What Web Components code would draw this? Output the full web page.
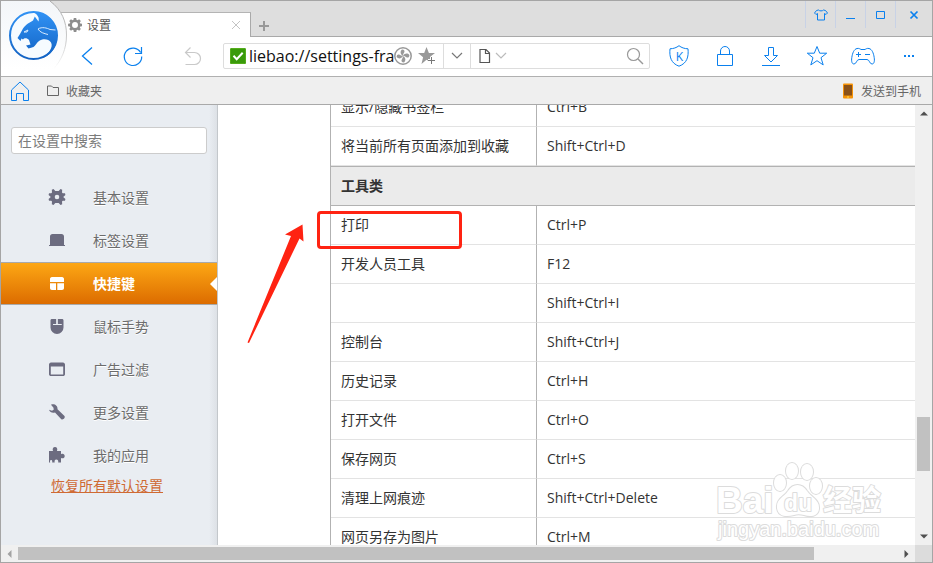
<!DOCTYPE html>
<html lang="zh-CN">
<head>
<meta charset="utf-8">
<title>设置</title>
<style>
html, body { height: 100%; margin: 0; }
body { font-family: "Open Sans", "Noto Sans CJK SC", sans-serif; font-size: 14px; color: #333; background: #fff; overflow: hidden; }
</style>
</head>
<body>
<browser-window></browser-window>

<script>
const ICONS = {
  gear: ['0 0 16 16', '<path fill="currentColor" fill-rule="evenodd" d="M6.6 0h2.8l.3 2 1.3.5L12.7 1.4l2 2-1.2 1.6.5 1.3 2 .3v2.8l-2 .3-.5 1.3 1.2 1.6-2 2-1.6-1.2-1.300.5-.3 2H6.600l-.3-2-1.300-.5-1.600 1.200-2-2 1.200-1.600-.5-1.300-2-.3V6.600l2-.3.5-1.300-1.200-1.600 2-2 1.600 1.200 1.300-.5zM8 4.600a3.400 3.400 0 100 6.800 3.400 3.400 0 000-6.800z"/>'],
  gearSolid: ['0 0 16 16', '<path fill="currentColor" fill-rule="evenodd" d="M4.500 0l1.800 2h3.400l1.800-2 1.700.8-.2 2.600.8.8 2.200.1.4 1.700L14.200 8l2.200 2-.4 1.700-2.200.1-.8.8.2 2.600-1.700.8-1.800-2H6.300l-1.800 2-1.700-.8.2-2.600-.8-.8L0 11.700-.4 10l2.200-2L-.4 6 0 4.300l2.200-.1.8-.8L2.800.8zM8 5.700a2.300 2.300 0 100 4.600 2.300 2.300 0 000-4.600z"/>'],
  close: ['0 0 10 10', '<path d="M1 1l8 8M9 1l-8 8" fill="none" stroke="currentColor"/>'],
  closeBold: ['0 0 10 10', '<path d="M1.500 1.500l7 7M8.500 1.500l-7 7" fill="none" stroke="currentColor" stroke-width="1.700"/>'],
  plus: ['0 0 10 10', '<path d="M5 0v10M0 5h10" fill="none" stroke="currentColor" stroke-width="2"/>'],
  shirt: ['0 0 14 12', '<path d="M4.500 1C5.500 2.200 8.500 2.200 9.500 1L11.500 1.500 13.500 4 12 5.500l-1.500-1V11h-7V4.500l-1.500 1L.5 4l2-2.500z" fill="none" stroke="currentColor"/>'],
  minimize: ['0 0 10 10', '<path d="M0 8.500h9" stroke="currentColor"/>'],
  maximize: ['0 0 10 10', '<path d="M.5 1.500h8v7h-8z" fill="none" stroke="currentColor"/>'],
  back: ['0 0 12 18', '<path d="M11 .5L1.500 9l9.500 8.500" fill="none" stroke="currentColor" stroke-width="1.300"/>'],
  reload: ['0 0 20 20', '<path d="M17.600 6.500A8.700 8.700 0 1 0 18.700 10.500M18.500 1v6.500h-6.500" fill="none" stroke="currentColor" stroke-width="1.200"/>'],
  undo: ['0 0 18 18', '<path d="M6.500.5l-5 5 5 5M1.500 5.500h9a6 6 0 010 12H1.500" fill="none" stroke="currentColor" stroke-width="1.200"/>'],
  check: ['0 0 16 16', '<rect width="16" height="16" rx="1.500" fill="#3a9a0a"/><rect x=".5" y=".5" width="15" height="15" rx="1" fill="none" stroke="#55ad1b"/><path d="M3.500 7.800l3.200 3.400 6-6.400" fill="none" stroke="#fff" stroke-width="2"/>'],
  fan: ['0 0 18 18', '<circle cx="9" cy="9" r="8.200" fill="none" stroke="currentColor" stroke-width="1.500"/><g fill="currentColor"><path d="M9 9C6.300 7.500 5.800 4.500 8 2.600c2.400 0 3 1.600 2.200 3C9.500 6.800 9 7.500 9 9z"/><path d="M9 9c1.500-2.700 4.500-3.200 6.400-1 0 2.400-1.600 3-3 2.200C11.200 9.500 10.500 9 9 9z"/><path d="M9 9c2.700 1.500 3.200 4.500 1 6.400-2.400 0-3-1.600-2.200-3C8.500 11.200 9 10.500 9 9z"/><path d="M9 9c-1.500 2.700-4.500 3.200-6.400 1 0-2.400 1.600-3 3-2.200C6.800 8.500 7.500 9 9 9z"/></g>'],
  starAdd: ['0 0 18 18', '<path d="M8.500 0l2.400 6H17l-4.800 3.800L13 12h-1v3l-3.500-2.200L3.500 17l1.600-6.800L0 6h6.200z" fill="currentColor"/><path d="M13.500 10v7M10 13.500h7" stroke="#fff" stroke-width="3"/><path d="M13.500 10v7M10 13.500h7" stroke="#777"/>'],
  chevron: ['0 0 12 8', '<path d="M1 1l5 5 5-5" fill="none" stroke="currentColor" stroke-width="1.200"/>'],
  page: ['0 0 12 14', '<path d="M1 .5h6L10.500 4v9.500H1zM6.500.5v4h4" fill="none" stroke="currentColor" stroke-width="1.200"/>'],
  search: ['0 0 18 18', '<circle cx="7.500" cy="7.500" r="6" fill="none" stroke="currentColor" stroke-width="1.200"/><path d="M12 12l5 5" stroke="currentColor" stroke-width="1.400"/>'],
  shield: ['0 0 20 22', '<path d="M10 .7C7.500 2.700 4.500 3.700 1 3.800c-.8 8 1 14.500 9 17.400 8-2.900 9.800-9.400 9-17.400C15.500 3.700 12.500 2.700 10 .7z" fill="none" stroke="currentColor"/><text x="10.500" y="15.500" text-anchor="middle" font-size="12" fill="currentColor">K</text>'],
  lock: ['0 0 18 20', '<path d="M1.500 8.500h15v11h-15zM4.500 8V5a4.500 4.500 0 019 0v3" fill="none" stroke="currentColor"/>'],
  download: ['0 0 18 20', '<path d="M0 19.500h18M6.500 1.500h5v8h4L9 16 2.500 9.500h4z" fill="none" stroke="currentColor"/>'],
  star: ['0 0 22 22', '<path d="M11 1.500l2.700 6.700h7L15 12.700l2.200 7.200L11 15.700 4.800 19.900 7 12.700 1.300 8.200h7z" fill="none" stroke="currentColor"/>'],
  gamepad: ['0 0 26 18', '<path d="M7 1.500c2-.5 3 .5 4 1h4c1-.5 2-1.500 4-1 3 .7 4.500 4.500 5.200 9 .6 4-.2 6.500-2.200 6.500-2.500 0-2.500-4.500-5-4.500H9c-2.500 0-2.500 4.500-5 4.500-2 0-2.800-2.500-2.200-6.500.7-4.500 2.200-8.300 5.200-9z" fill="none" stroke="currentColor"/><path d="M6 7.500h5M8.500 5v5M15 7.500h5" stroke="currentColor"/>'],
  more: ['0 0 12 4', '<path d="M1 1h2v2H1zM5 1h2v2H5zM9 1h2v2H9z" fill="currentColor"/>'],
  home: ['0 0 18 20', '<path d="M.5 19.500V9L9 1l8.500 8v10.500h-5v-7h-7v7z" fill="none" stroke="currentColor"/>'],
  folder: ['0 0 12 11', '<path d="M.5 1h4L6 2.500h5.500v8H.5z" fill="none" stroke="currentColor"/>'],
  phone: ['0 0 10 16', '<rect y=".5" width="10" height="15" rx="1" fill="#f59206"/><rect x="1" y="2" width="8" height="10.500" fill="#8a5118"/><path d="M4 14h2" stroke="#ffe24a"/>'],
  tab: ['0 0 16 16', '<path d="M1 13V4.500C1 3 2 2 3.500 2h9C14 2 15 3 15 4.500V13h1v1H0v-1z" fill="currentColor"/>'],
  layout: ['0 0 16 16', '<path d="M1 7V4c0-1 .7-2 2-2h10c1.300 0 2 1 2 2v3zM1 8.300h6V15H3c-1.300 0-2-.7-2-2zM8.300 8.300H15V13c0 1.300-.7 2-2 2H8.300z" fill="currentColor"/>'],
  mouse: ['0 0 16 16', '<path d="M1.500 9.500V2.500c0-1 .6-1.500 1.500-1.500h4.300v5H4v1h8.500V6H8.700V1H13c.9 0 1.500.5 1.500 1.500v7a6.500 6.500 0 01-13 0z" fill="currentColor" fill-rule="evenodd"/><path d="M4 6.500h8.500M8 1v5.500" stroke="#e9edf2" stroke-width="1"/>'],
  frame: ['0 0 16 16', '<path fill-rule="evenodd" d="M0 3.500C0 2.500.9 1.500 2 1.500h12c1.100 0 2 1 2 2v9.700c0 1-.9 1.800-2 1.800H2c-1.100 0-2-.8-2-1.800zm1.800 2v8h12.400v-8z" fill="currentColor"/>'],
  wrench: ['0 0 16 16', '<path d="M2 .8c3-1.500 7 .8 6.500 4.500L15.500 12c1 1.800-1.200 4.200-3.200 3.200L6 8.400C3.600 9.200.8 8.200 0 5.800l3 .9 1.700-1-.2-2z" fill="currentColor"/>'],
  puzzle: ['0 0 16 16', '<path d="M0 4h4c-.8-2 0-4 2-4s2.800 2 2 4h4v3.200c2-1.200 3.700 0 3.700 1.800S14 12 12 11v4.500H9.200c.4-2-.5-3-1.900-3s-2 1-1.600 3H3.200c.3-2-.4-2.500-1.200-2.500s-1.300.8-.8 2.500H0z" fill="currentColor"/>'],
  up: ['0 0 8 5', '<path d="M0 4.500h8L4 .5z" fill="currentColor"/>'],
  down: ['0 0 8 5', '<path d="M0 .5h8l-4 4z" fill="currentColor"/>'],
  left: ['0 0 5 8', '<path d="M4.500 0v8l-4-4z" fill="currentColor"/>'],
  right: ['0 0 5 8', '<path d="M.5 0v8l4-4z" fill="currentColor"/>'],
};

const SHORTCUTS = [
  ['显示/隐藏书签栏', 'Ctrl+B'],
  ['将当前所有页面添加到收藏', 'Shift+Ctrl+D'],
  ['工具类'],
  ['打印', 'Ctrl+P'],
  ['开发人员工具', 'F12'],
  ['', 'Shift+Ctrl+I'],
  ['控制台', 'Shift+Ctrl+J'],
  ['历史记录', 'Ctrl+H'],
  ['打开文件', 'Ctrl+O'],
  ['保存网页', 'Ctrl+S'],
  ['清理上网痕迹', 'Shift+Ctrl+Delete'],
  ['网页另存为图片', 'Ctrl+M'],
];

/* Defines an element whose open shadow root holds the given markup. */
function define(name, html, setup) {
  const tpl = document.createElement('template');
  tpl.innerHTML = html;
  customElements.define(name, class extends HTMLElement {
    constructor() {
      super();
      this.attachShadow({ mode: 'open' }).append(tpl.content.cloneNode(true));
      this.ready = false;
    }
    connectedCallback() {
      if (this.ready) return;
      this.ready = true;
      if (setup) setup(this, this.shadowRoot);
    }
  });
}

define('ui-icon', `<style>:host{display:inline-flex;flex:none} svg{display:block;overflow:visible}</style>`, (el, root) => {
  const [box, body] = ICONS[el.getAttribute('name')];
  const [, , w, h] = box.split(' ');
  const holder = document.createElement('template');
  holder.innerHTML = `<svg aria-hidden="true" width="${el.getAttribute('w') || w}" height="${el.getAttribute('h') || h}" viewBox="${box}">${body}</svg>`;
  root.append(holder.content);
});

define('icon-button', `
<style>
:host{display:flex;flex:none;color:#0a80ee}
button{flex:1;display:flex;align-items:center;justify-content:center;border:0;padding:0;background:none;color:inherit;font:inherit}
</style><button type="button"><slot></slot></button>`, (el, root) => {
  root.querySelector('button').setAttribute('aria-label', el.getAttribute('label'));
});

define('brand-logo', `
<style>:host{display:block} svg{display:block}</style>
<svg width="66" height="68" viewBox="0 0 66 68" role="img" aria-label="猎豹浏览器">
  <defs>
    <linearGradient id="blue" gradientUnits="userSpaceOnUse" x1="0" y1="10" x2="0" y2="58"><stop stop-color="#3193f5"/><stop offset="1" stop-color="#1262c3"/></linearGradient>
    <linearGradient id="bg" x2="0" y2="1"><stop stop-color="#f3f6f9"/><stop offset="1" stop-color="#fff"/></linearGradient>
    <linearGradient id="edge" x2="0" y2="1"><stop stop-color="#aaa"/><stop offset=".6" stop-color="#ccc"/><stop offset="1" stop-color="#fff"/></linearGradient>
  </defs>
  <path d="M0 0h49C62 10 66 21 66 34c0 14-5 24-13 34H0z" fill="url(#bg)"/>
  <path d="M49 0C61 9 65.500 21 65.500 34c0 14-5 25-13 34" fill="none" stroke="url(#edge)"/>
  <circle cx="32.500" cy="34.500" r="23.500" fill="#f6fbff" stroke="url(#blue)" stroke-width="2"/>
  <path d="M19 33L22 27.500C25 23 29 21.500 32 19.500L33.800 15.500L37.500 20.500C38.500 17 37 13.500 32 11C46 10.500 56.500 21 56 35C56 47 49 55.500 40 57.500C48 53 52.500 46 50 41.500C47.500 37.500 41.500 37.500 38 40C35.500 42 34.500 44.500 32.500 46L27.500 47.500L25 44.500L29.500 43.500L28 39C26 36.500 23 37 22 38.500L20.500 37.500L19.500 40L16.500 37Z" fill="url(#blue)"/>
  <path d="M37 28c4-2.500 9-1 12 .5l5.500.5M37 28c2 3.500 6 4.500 10 5.500M23 31l4-2-1 2z" fill="none" stroke="#d8ebff"/>
</svg>`);

define('title-bar', `
<style>
:host{display:flex;height:35px;background:#dedede;border-bottom:1px solid #a9a9a9;padding-left:59px}
.tab{display:flex;align-items:center;align-self:flex-end;box-sizing:border-box;width:191px;height:25px;margin-bottom:-1px;padding:0 9px 0 8px;background:#fff;border-top:1px solid #b4b4b4;border-right:1px solid #a9a9a9;color:#555;font-size:12px}
.mark{color:#8d8d8d}
.tab span{flex:1;margin-left:5px}
.tab icon-button{color:#c4c4c4}
.new{width:26px;padding-top:14px;color:#999}
.grow{flex:1}
.win{width:29px;height:27px;border-left:1px solid #c8d2e6}
.win.last{width:36px}
</style>
<div class="tab" role="tab" aria-selected="true"><ui-icon class="mark" name="gear" w="14" h="14"></ui-icon><span>设置</span><icon-button label="关闭标签"><ui-icon name="close"></ui-icon></icon-button></div>
<icon-button class="new" label="新建标签"><ui-icon name="plus"></ui-icon></icon-button>
<div class="grow"></div>
<icon-button class="win" label="皮肤"><ui-icon name="shirt"></ui-icon></icon-button>
<icon-button class="win" label="最小化"><ui-icon name="minimize"></ui-icon></icon-button>
<icon-button class="win" label="最大化"><ui-icon name="maximize"></ui-icon></icon-button>
<icon-button class="win last" label="关闭"><ui-icon name="closeBold"></ui-icon></icon-button>`);

define('address-bar', `
<style>
:host{display:flex;box-sizing:border-box;min-width:0;height:26px;border:1px solid #ddd;border-radius:2px;background:#fff}
.part{display:flex;align-items:center;min-width:0}
.url{flex:247 1 0}
.find{flex:170 1 0;padding-left:8px;border-left:1px solid #ddd}
input{flex:1;width:0;min-width:0;border:0;outline:0;padding:0;background:none;font:inherit;color:#111}
.url input{font-size:16px;height:24px}
icon-button{color:#999}
.drop{width:26px;height:24px;border-left:1px solid #ddd;color:#777}
.check{margin:0 3px 0 6px}
.star{margin:0 7px 0 6px}
.go{width:28px}
.type{color:#555}
.pick{margin-left:4px;color:#bbb}
</style>
<div class="part url">
  <ui-icon class="check" name="check"></ui-icon>
  <input type="text" aria-label="网址" value="liebao://settings-fra">
  <icon-button label="加速"><ui-icon name="fan"></ui-icon></icon-button>
  <icon-button class="star" label="收藏"><ui-icon name="starAdd"></ui-icon></icon-button>
  <icon-button class="drop" label="历史"><ui-icon name="chevron"></ui-icon></icon-button>
</div>
<div class="part find">
  <icon-button class="type" label="搜索引擎"><ui-icon name="page"></ui-icon></icon-button>
  <icon-button class="pick" label="选择引擎"><ui-icon name="chevron"></ui-icon></icon-button>
  <input type="text" aria-label="搜索">
  <icon-button class="go" label="开始搜索"><ui-icon name="search"></ui-icon></icon-button>
</div>`);

define('tool-bar', `
<style>
:host{display:flex;align-items:center;height:38px;background:#fff;border-bottom:1px solid #b0b0b0;padding:0 0 1px 63px}
icon-button{width:46px;height:36px}
.undo{margin-left:14px;color:#c9c9c9}
address-bar{flex:1;margin:0 6px 0 7px}
</style>
<icon-button label="后退"><ui-icon name="back"></ui-icon></icon-button>
<icon-button label="刷新"><ui-icon name="reload"></ui-icon></icon-button>
<icon-button class="undo" label="恢复"><ui-icon name="undo"></ui-icon></icon-button>
<address-bar></address-bar>
<icon-button label="安全"><ui-icon name="shield"></ui-icon></icon-button>
<icon-button label="锁"><ui-icon name="lock"></ui-icon></icon-button>
<icon-button label="下载"><ui-icon name="download"></ui-icon></icon-button>
<icon-button label="收藏"><ui-icon name="star"></ui-icon></icon-button>
<icon-button label="游戏"><ui-icon name="gamepad"></ui-icon></icon-button>
<icon-button label="更多"><ui-icon name="more"></ui-icon></icon-button>`);

define('bookmark-bar', `
<style>
:host{display:flex;align-items:center;height:27px;background:#efefef;border-bottom:1px solid #a9a9a9;padding:0 11px 0 10px;font-size:12px}
button{display:flex;align-items:center;gap:8px;border:0;padding:0;background:none;font:inherit;color:#666}
.fav{margin-left:18px;gap:7px}
.grow{flex:1}
</style>
<icon-button label="主页"><ui-icon name="home"></ui-icon></icon-button>
<button type="button" class="fav"><ui-icon name="folder"></ui-icon>收藏夹</button>
<div class="grow"></div>
<button type="button"><ui-icon name="phone"></ui-icon>发送到手机</button>`);

define('nav-item', `
<style>
:host{display:block;height:43px}
a{display:flex;align-items:center;box-sizing:border-box;height:43px;padding:0 0 2px 48px;gap:28px;color:#6c6c6c;text-decoration:none;text-shadow:0 1px 0 #fff;position:relative}
slot[name=icon]{color:#6c6c80}
:host([active]) a{color:#fff;font-weight:bold;text-shadow:none;border:solid #a9a9a9;border-width:1px 0;background:linear-gradient(#fda714,#dc6c00)}
:host([active]) slot[name=icon]{color:#fff}
:host([active]) a::after{content:"";position:absolute;right:0;top:14px;border:7px solid transparent;border-left:0;border-right-color:#fff}
</style><a href="#"><slot name="icon"></slot><slot></slot></a>`, (el, root) => {
  if (el.hasAttribute('active')) root.querySelector('a').setAttribute('aria-current', 'page');
});

define('settings-sidebar', `
<style>
:host{display:block;box-sizing:border-box;flex:none;width:217px;background:linear-gradient(90deg,transparent 208px,#dde1e6),#e9edf2;border-right:1px solid #c3c7cb}
input{display:block;box-sizing:border-box;width:196px;height:27px;margin:22px 0 22px 10px;padding:0 6px;border:1px solid #ccc;border-radius:3px;background:#fff;font:inherit;color:#333}
input::placeholder{color:#7c7c7c;opacity:1}
nav{display:block}
.reset{display:block;margin-left:50px;line-height:18px;color:#cf6a33}
</style>
<input type="search" placeholder="在设置中搜索" aria-label="在设置中搜索">
<nav>
  <nav-item><ui-icon slot="icon" name="gearSolid"></ui-icon>基本设置</nav-item>
  <nav-item><ui-icon slot="icon" name="tab"></ui-icon>标签设置</nav-item>
  <nav-item active><ui-icon slot="icon" name="layout"></ui-icon>快捷键</nav-item>
  <nav-item><ui-icon slot="icon" name="mouse"></ui-icon>鼠标手势</nav-item>
  <nav-item><ui-icon slot="icon" name="frame"></ui-icon>广告过滤</nav-item>
  <nav-item><ui-icon slot="icon" name="wrench"></ui-icon>更多设置</nav-item>
  <nav-item><ui-icon slot="icon" name="puzzle"></ui-icon>我的应用</nav-item>
</nav>
<a class="reset" href="#">恢复所有默认设置</a>`);

define('shortcut-table', `
<style>
:host{display:block}
table{width:100%;border-collapse:separate;border-spacing:0;table-layout:fixed;border-left:1px solid #b2b2b2}
col.name{width:206px}
td,th{box-sizing:border-box;height:39px;padding:0 10px;text-align:left;line-height:20px;border-bottom:1px solid #e3e3e3;white-space:nowrap}
td:first-child{border-right:1px solid #b2b2b2}
th{height:40px;background:#ebebeb;border-top:1px solid #b2b2b2;border-bottom-color:#b2b2b2}
</style>
<table><colgroup><col class="name"><col></colgroup><tbody></tbody></table>`, (el, root) => {
  const body = root.querySelector('tbody');
  for (const [name, keys] of SHORTCUTS) {
    const row = body.insertRow();
    if (keys === undefined) {
      const th = document.createElement('th');
      th.colSpan = 2;
      th.textContent = name;
      row.append(th);
    } else {
      row.insertCell().textContent = name;
      row.insertCell().textContent = keys;
    }
  }
});

define('scroll-strip', `
<style>
:host{display:flex;align-items:center;background:#f0f0f0;color:#505050}
:host([vertical]){flex-direction:column}
ui-icon{margin:6px}
.before{flex:var(--before) 1 0}
.thumb{flex:var(--size) 1 0;background:#c1c1c1;align-self:stretch;margin:2px 0}
.after{flex:var(--after) 1 0}
:host([vertical]) .thumb{margin:0 2px}
:host([at-start]) ui-icon:first-of-type{color:#a3a3a3}
</style>
<div class="before"></div><div class="thumb"></div><div class="after"></div>`, (el, root) => {
  for (const key of ['before', 'size', 'after']) el.style.setProperty('--' + key, el.getAttribute(key));
  const arrow = name => {
    const icon = document.createElement('ui-icon');
    icon.setAttribute('name', name);
    return icon;
  };
  const vertical = el.hasAttribute('vertical');
  root.querySelector('.before').before(arrow(vertical ? 'up' : 'left'));
  root.append(arrow(vertical ? 'down' : 'right'));
});

define('paw-mark', `
<style>:host{display:block;pointer-events:none} svg{display:block}
svg{fill:#fff;stroke:#dcdcdc;stroke-width:2;stroke-linejoin:round;paint-order:stroke;font-family:"Liberation Sans","Noto Sans CJK SC",sans-serif;font-weight:bold}
.site{font-weight:normal}</style>
<svg width="172" height="84" viewBox="0 0 172 84">
  <text x="1" y="54" font-size="37">Bai</text>
  <ellipse cx="65" cy="24" rx="6" ry="8"/><ellipse cx="77" cy="12" rx="6" ry="8"/><ellipse cx="92" cy="13" rx="6" ry="8"/><ellipse cx="101" cy="27" rx="6" ry="8"/>
  <path d="M62 49c-1-9 7-11 11-17 5-8 14-8 19 0 4 6 13 9 12 18-1 8-9 8-15 6-4-1-7-1-10 0-7 2-16 2-17-7z"/>
  <text x="69" y="52" font-size="23">du</text>
  <text x="108" y="52" font-size="29">经验</text>
  <text class="site" x="3" y="77" font-size="20">jingyan.baidu.com</text>
</svg>`);

define('browser-window', `
<style>
:host{display:flex;flex-direction:column;box-sizing:border-box;height:100vh;border:1px solid #a5a5a5;position:relative;background:#fff}
brand-logo{position:absolute;left:0;top:0}
title-bar,tool-bar,bookmark-bar{flex:none}
.view{flex:1;min-height:0;display:flex}
main{flex:1;min-width:0;overflow:hidden;position:relative;padding-left:112px}
shortcut-table{margin-top:-17px}
.v{flex:none;width:17px}
.foot{display:flex;flex:none;height:17px;background:#dcdcdc}
.h{flex:1;margin-right:17px}
.box{position:absolute;left:99px;top:106px;width:145px;height:38px;box-sizing:border-box;border:3px solid #ff2312;border-radius:4px}
.arrow{position:absolute;left:28px;top:118px}
paw-mark{position:absolute;right:28px;bottom:2px}
</style>
<title-bar></title-bar>
<tool-bar></tool-bar>
<bookmark-bar></bookmark-bar>
<div class="view">
  <settings-sidebar></settings-sidebar>
  <main>
    <shortcut-table></shortcut-table>
    <div class="box"></div>
    <svg class="arrow" width="60" height="122" viewBox="0 0 60 122" aria-hidden="true"><path d="M1.500 119.500L45 13l-6-1.500L56.500 1.500 57.500 18.500 53.500 15.500 3 120z" fill="#ff2312"/></svg>
    <paw-mark></paw-mark>
  </main>
  <scroll-strip class="v" vertical before="295" size="54" after="57"></scroll-strip>
</div>
<div class="foot"><scroll-strip class="h" at-start before="0" size="796" after="84"></scroll-strip></div>
<brand-logo></brand-logo>`);
</script>
</body>
</html>
